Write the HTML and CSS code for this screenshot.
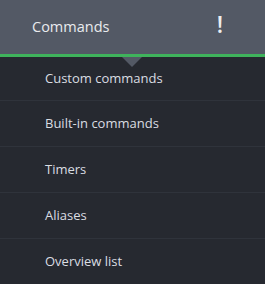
FILE: index.html
```html
<!DOCTYPE html>
<html>
<head>
<meta charset="utf-8">
<link rel="stylesheet" href="styles.css">
</head>
<body>
<div class="panel">
  <div class="header">
    <span class="title">Commands</span>
    <span class="alert">!</span>
    <span class="caret"></span>
  </div>
  <ul class="menu">
    <li class="item first">Custom commands</li>
    <li class="item">Built-in commands</li>
    <li class="item">Timers</li>
    <li class="item">Aliases</li>
    <li class="item">Overview list</li>
  </ul>
</div>
</body>
</html>
```
FILE: styles.css
```css
html, body {
  margin: 0;
  padding: 0;
  background: #262930;
}
.panel {
  width: 265px;
  height: 284px;
  overflow: hidden;
  font-family: "Open Sans", sans-serif;
}
.header {
  position: relative;
  height: 54px;
  background: #535965;
  border-bottom: 3px solid #3fb35c;
  display: flex;
  align-items: center;
  justify-content: space-between;
  padding: 0 42px 0 32px;
}
.title {
  color: #e9ebee;
  font-size: 14.5px;
  margin-top: -2px;
}
.alert {
  color: #eceef0;
  font-size: 23px;
  font-weight: 600;
  margin-top: -6px;
}
.caret {
  position: absolute;
  left: 122px;
  bottom: -13px;
  width: 0;
  height: 0;
  border-left: 10px solid transparent;
  border-right: 10px solid transparent;
  border-top: 10px solid #535965;
}
.menu {
  list-style: none;
  margin: 0;
  padding: 0;
}
.item {
  height: 45px;
  border-top: 1px solid #2f333b;
  display: flex;
  align-items: center;
  padding-left: 45px;
  padding-bottom: 2px;
  box-sizing: border-box;
  height: 46px;
  color: #dadde2;
  font-size: 13px;
}
.item.first {
  height: 43px;
  border-top: 0;
}
```
